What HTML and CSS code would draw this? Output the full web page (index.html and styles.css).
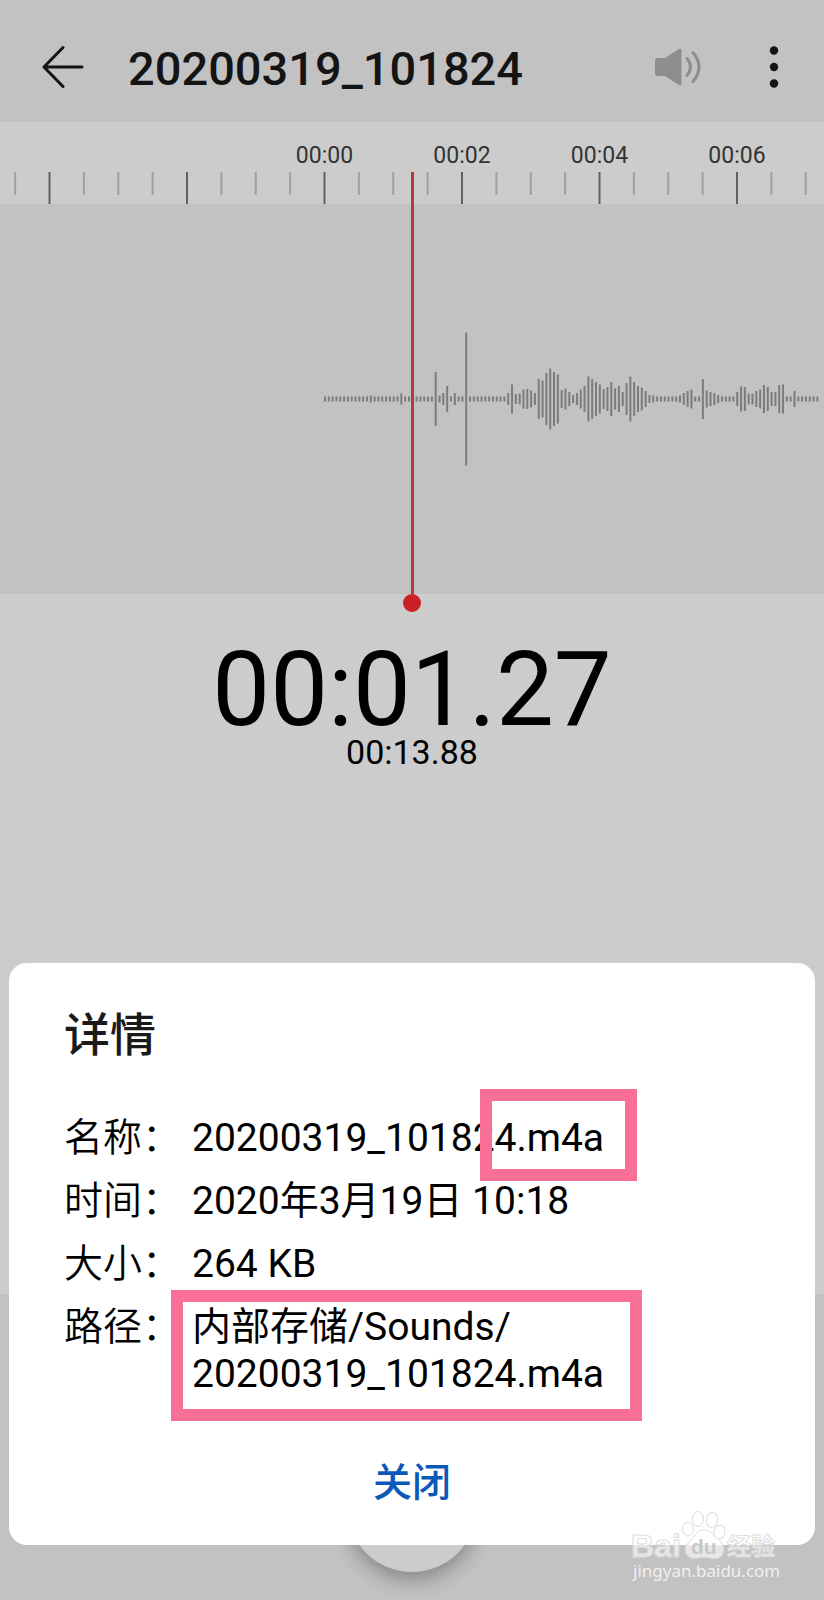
FILE: index.html
```
<!DOCTYPE html>
<html lang="zh-CN">
<head>
    <meta charset="UTF-8">
    <meta name="viewport" content="width=device-width, initial-scale=1.0">
    <title>20200319_101824</title>
    <link rel="stylesheet" href="styles.css">
</head>
<body>
    <header class="topo">
        <button type="button" class="icone" aria-label="返回">
            <svg width="42" height="44" viewBox="0 0 42 44" fill="none" stroke="#141414" stroke-width="3" stroke-linecap="round" stroke-linejoin="round">
                <path d="M40 22H2M21 2.5L2 22l19 19.5"/>
            </svg>
        </button>
        <h1>20200319_101824</h1>
        <button type="button" class="icone" aria-label="扬声器">
            <svg width="48" height="40" viewBox="0 0 48 40">
                <path d="M4 11h7L24.500 2.200Q27.500 .8 27.500 4v32q0 3.200-3 1.800L11 29H4q-3 0-3-3V14q0-3 3-3z" fill="#8e8e8e"/>
                <path d="M33 11.500q7 8.500 0 17M39 5.500q12 14.500 0 29" fill="none" stroke="#8e8e8e" stroke-width="3" stroke-linecap="round"/>
            </svg>
        </button>
        <button type="button" class="icone icone-menu" aria-label="更多">
            <svg width="10" height="44" viewBox="0 0 10 44" fill="#141414">
                <circle cx="5" cy="5.500" r="4.200"/>
                <circle cx="5" cy="22" r="4.200"/>
                <circle cx="5" cy="38.500" r="4.200"/>
            </svg>
        </button>
    </header>

    <main class="gravador">
        <div class="trilha">
            <svg class="regua" id="regua" width="100%" height="82"></svg>
            <svg class="onda" id="onda" width="100%" height="390"></svg>
            <div class="cursor"></div>
        </div>
        <p class="tempo">00:01.27</p>
        <p class="total">00:13.88</p>
    </main>

    <footer class="controles">
        <button type="button" class="tocar" aria-label="播放"></button>
    </footer>

    <!-- Detalhes da gravação -->
    <section class="detalhes" role="dialog" aria-labelledby="tituloDetalhes">
        <h2 id="tituloDetalhes">详情</h2>
        <dl>
            <dt>名称：</dt>
            <dd>20200319_101824.m4a<span class="marca marca-nome"></span></dd>
            <dt>时间：</dt>
            <dd>2020年3月19日 10:18</dd>
            <dt>大小：</dt>
            <dd>264 KB</dd>
            <dt>路径：</dt>
            <dd>内部存储/Sounds/<br>20200319_101824.m4a<span class="marca marca-caminho"></span></dd>
        </dl>
        <button type="button" class="fechar">关闭</button>
    </section>

    <svg class="selo" width="156" height="80" viewBox="0 0 156 80">
        <g class="selo-forma">
            <text class="selo-bai" x="3" y="49">Bai</text>
            <ellipse cx="60" cy="21" rx="5.500" ry="7"/>
            <ellipse cx="70" cy="11" rx="5.500" ry="7.500"/>
            <ellipse cx="84" cy="12" rx="5.500" ry="7.500" transform="rotate(8 84 12)"/>
            <ellipse cx="91.500" cy="24" rx="5.500" ry="7" transform="rotate(12 91 24)"/>
            <path d="M76 22c7 0 9 5 14 9 5 5 7 9 5 14-2 6-8 6-12 5-5-1-9-1-14 0-4 1-9 0-11-5-2-6 1-9 6-14 4-4 5-9 12-9z"/>
            <text class="selo-cjk" x="99" y="47">经验</text>
        </g>
        <text class="selo-du" x="63" y="46">du</text>
        <text class="selo-url" x="5" y="69">jingyan.baidu.com</text>
    </svg>

    <script src="script.js"></script>
</body>
</html>
```
FILE: styles.css
```
/* Estilos globais */
* {
    box-sizing: border-box;
}

body {
    margin: 0;
    min-height: 100vh;
    display: flex;
    flex-direction: column;
    position: relative;
    overflow-x: hidden;
    font-family: Roboto, "Noto Sans CJK SC", sans-serif;
    background-color: #cccccc;
    color: #000;
}

h1, h2, p, dl, dd {
    margin: 0;
}

button {
    border: none;
    padding: 0;
    background: none;
    font-family: inherit;
    cursor: pointer;
}

/* Barra do topo */
.topo {
    display: flex;
    align-items: center;
    height: 122px;
    padding: 12px 45px 0 42px;
    background-color: #c2c2c2;
}

.topo h1 {
    flex: 1;
    margin-left: 44px;
    padding-top: 4px;
    font-size: 47px;
    line-height: 56px;
    font-weight: 500;
    color: #141414;
}

.icone {
    display: flex;
}

.icone-menu {
    margin-left: 67px;
}

/* Régua e onda sonora */
.gravador {
    flex: 1;
    text-align: center;
}

.trilha {
    position: relative;
}

.regua,
.onda {
    display: block;
}

.onda {
    background-color: #c2c2c2;
}

.regua text {
    font-size: 23px;
    fill: #333;
    text-anchor: middle;
}

.regua line {
    stroke: #a0a0a0;
    stroke-width: 2;
}

.regua .maior {
    stroke: #606060;
}

.onda line {
    stroke: #7c7c7c;
    stroke-width: 2;
}

.cursor {
    position: absolute;
    top: 50px;
    bottom: 0;
    left: 50%;
    width: 3px;
    margin-left: -1px;
    background-color: #bb3838;
}

.cursor::after {
    content: "";
    position: absolute;
    top: 100%;
    left: -8px;
    width: 18px;
    height: 18px;
    border-radius: 50%;
    background-color: #cb2026;
}

.tempo {
    padding-top: 48px;
    font-size: 103px;
    line-height: 96px;
}

.total {
    font-size: 34px;
    line-height: 28px;
}

/* Controles */
.controles {
    display: flex;
    justify-content: center;
    align-items: center;
    height: 306px;
    background-color: #c2c2c2;
}

.tocar {
    width: 130px;
    height: 130px;
    margin-top: 120px;
    border-radius: 50%;
    background-color: #cccccc;
    box-shadow: 0 8px 20px rgba(0, 0, 0, 0.3);
}

/* Janela de detalhes */
.detalhes {
    position: absolute;
    left: 9px;
    right: 9px;
    bottom: 55px;
    padding: 38px 55px 33px;
    border-radius: 18px;
    background-color: #fff;
}

.detalhes h2 {
    font-size: 46px;
    line-height: 68px;
    font-weight: 500;
    color: #1a1a1a;
}

.detalhes dl {
    display: grid;
    grid-template-columns: auto 1fr;
    gap: 16px 11px;
    margin-top: 46px;
    font-size: 39px;
    line-height: 47px;
}

.detalhes dt {
    font-weight: 350;
}

.detalhes dd {
    position: relative;
}

.marca {
    position: absolute;
    border: 12px solid #f87096;
}

.marca-nome {
    top: -26px;
    left: 288px;
    width: 157px;
    height: 92px;
}

.marca-caminho {
    top: -14px;
    left: -21px;
    width: 471px;
    height: 131px;
}

.fechar {
    display: block;
    margin: 57px auto 0;
    font-size: 39px;
    line-height: 57px;
    font-weight: 500;
    color: #0a59b8;
}

/* Selo */
.selo {
    position: absolute;
    right: 40px;
    bottom: 12px;
}

.selo-forma {
    fill: rgba(255, 255, 255, 0.6);
    stroke: #dcdcdc;
    stroke-width: 1;
}

.selo-bai {
    font: bold 32px "Liberation Sans", sans-serif;
}

.selo-cjk {
    font: bold 24px "Noto Sans CJK SC", sans-serif;
}

.selo-du {
    font: bold 21px "Liberation Sans", sans-serif;
    fill: #c8c8c8;
}

.selo-url {
    font: 17px "Noto Sans", sans-serif;
    fill: #f0f0f0;
}
```
FILE: script.js
```
let regua = document.getElementById("regua")
let onda = document.getElementById("onda")

// posição do 00:00 em relação ao cursor, que fica no meio da tela
let inicioRegua = -87.5
let inicioOnda = -87
let passoRegua = 34.375
let passoOnda = 3.817

let alturas = [
    5, 5, 5, 5, 5, 5, 5, 5, 5, 5, 5, 5, 7, 5, 5, 5, 5, 5, 5, 5,
    11, 5, 5, 5, 5, 5, 5, 5, 5, 54, 7, 12, 26, 5, 12, 5, 5, 133, 5, 5,
    5, 5, 5, 5, 5, 5, 5, 5, 12, 29, 10, 11, 19, 20, 17, 12, 40, 37, 52, 61,
    54, 49, 18, 21, 14, 8, 12, 19, 26, 45, 40, 34, 29, 20, 24, 34, 21, 26, 14, 32,
    45, 34, 26, 23, 16, 8, 7, 5, 5, 5, 5, 5, 5, 7, 12, 16, 19, 5, 5, 40,
    17, 14, 12, 8, 5, 5, 5, 5, 14, 25, 24, 11, 11, 16, 19, 28, 24, 14, 14, 28,
    29, 5, 5, 16, 5, 5, 5, 5, 5, 5
]

function criar(tag, atributos) {
    let elemento = document.createElementNS("http://www.w3.org/2000/svg", tag)
    for (let nome in atributos) {
        elemento.setAttribute(nome, atributos[nome])
    }
    return elemento
}

// grupo com a origem no meio da tela
function criarGrupo(pai) {
    let grupo = criar("svg", { x: "50%", overflow: "visible" })
    pai.appendChild(grupo)
    return grupo
}

let marcas = criarGrupo(regua)

for (let i = -9; i <= 14; i++) {
    let x = inicioRegua + i * passoRegua
    let maior = i % 4 == 0

    marcas.appendChild(criar("line", {
        x1: x, x2: x, y1: 50, y2: maior ? 82 : 73, class: maior ? "maior" : "menor"
    }))

    if (maior && i >= 0) {
        let texto = criar("text", { x: x, y: 41 })
        texto.textContent = "00:0" + i / 2
        marcas.appendChild(texto)
    }
}

let barras = criarGrupo(onda)

alturas.forEach(function (altura, i) {
    let x = inicioOnda + i * passoOnda
    barras.appendChild(criar("line", { x1: x, x2: x, y1: 195 - altura / 2, y2: 195 + altura / 2 }))
})
```
